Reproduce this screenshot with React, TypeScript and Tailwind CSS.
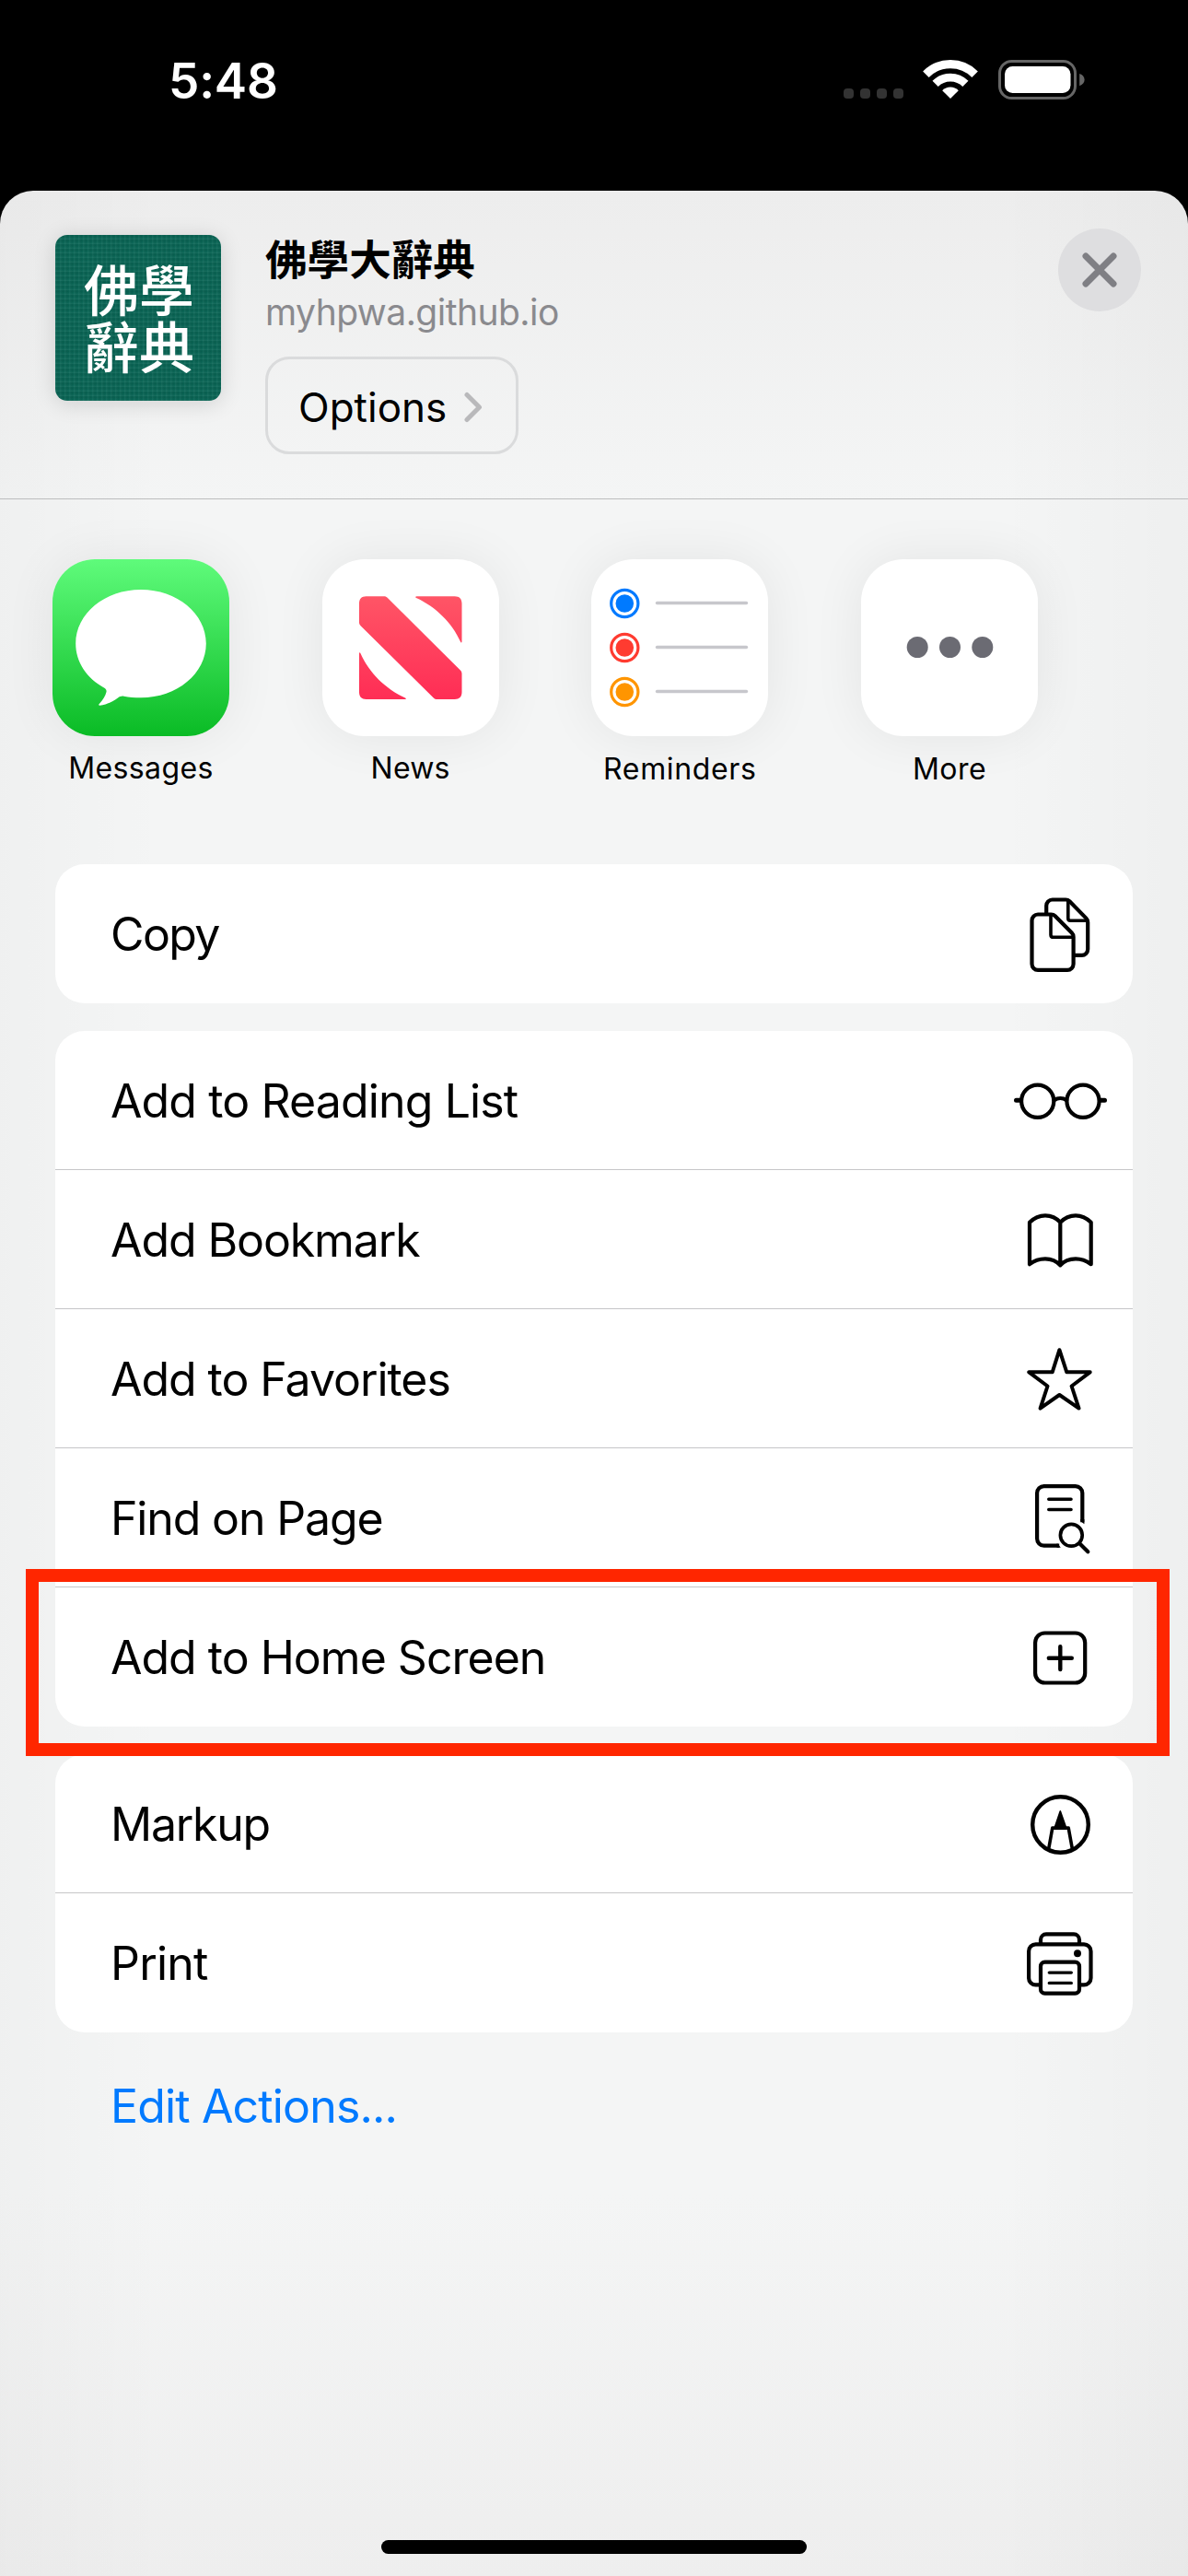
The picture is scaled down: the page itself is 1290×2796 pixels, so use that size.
import React from "react";

function StatusBar() {
  return (
    <div className="flex h-[207px] items-start justify-between pt-[65px] pr-[111px] pl-[183px]">
      <div className="text-[53px] leading-[46px] font-semibold tracking-[-0.2px] text-white">5:48</div>
      <div className="flex items-start">
        <div className="mt-[31px] flex gap-[7px]">
          {[0, 1, 2, 3].map((i) => (
            <span key={i} className="size-[11px] rounded-[4px] bg-[#333333]" />
          ))}
        </div>
        <svg className="ml-[21px] h-[43px] w-[60px]" viewBox="0 0 60 43" fill="none" stroke="#fff">
          <path d="M3.4 15.7a37.6 37.6 0 0 1 53.2 0" strokeWidth="9.2" />
          <path d="M13.6 25.9a23.2 23.2 0 0 1 32.8 0" strokeWidth="8.8" />
          <path d="M30 42l-8.8-8.8a12.6 12.6 0 0 1 17.6 0z" fill="#fff" stroke="none" />
        </svg>
        <svg className="ml-[22px] h-[43px] w-[95px]" viewBox="0 0 95 43">
          <rect x="1.5" y="1.5" width="82" height="40" rx="13" fill="none" stroke="#666666" strokeWidth="3" />
          <rect x="7" y="7" width="71.5" height="29" rx="8.5" fill="#fff" />
          <path d="M88.2 15c3.4 1.2 5.4 3.6 5.4 6.6s-2 5.400-5.400 6.600z" fill="#666666" />
        </svg>
      </div>
    </div>
  );
}

function Header() {
  return (
    <header className="flex h-[335px] items-start border-b border-[#bcbdbe] pl-[60px]">
      <div className="mt-[48px] flex size-[180px] items-center justify-center rounded-[13px] bg-[#0a6656] bg-[repeating-linear-gradient(0deg,rgba(255,255,255,0.06)_0px,rgba(255,255,255,0)_2px,rgba(0,40,30,0.1)_4px,rgba(255,255,255,0)_5px),repeating-linear-gradient(90deg,rgba(255,255,255,0.05)_0px,rgba(0,40,30,0.08)_3px,rgba(255,255,255,0)_5px)] shadow-[0_3px_24px_rgba(0,0,0,0.14)]">
        <div className="mt-[-5px] ml-[2px] flex flex-col text-center font-['Noto_Sans_CJK_TC',sans-serif] text-[60px] leading-[62px] font-medium text-white">
          <span>佛學</span>
          <span>辭典</span>
        </div>
      </div>
      <div className="mt-[46px] ml-[48px] flex flex-col items-start">
        <div className="font-['Noto_Sans_CJK_TC',sans-serif] text-[45.600px] leading-[53px] font-bold text-black">
          佛學大辭典
        </div>
        <div className="mt-[9px] text-[39px] leading-[47px] tracking-[-0.52px] text-[#8a8a8e]">
          myhpwa.github.io
        </div>
        <button className="mt-[25px] flex h-[106px] w-[275px] items-center rounded-[26px] border-[3px] border-[#dadbdc] pt-[4px] pl-[33px]">
          <span className="text-[44px] leading-[54px] text-black">Options</span>
          <svg className="ml-[19px] h-[36px] w-[22px]" viewBox="0 0 22 36" fill="none">
            <path
              d="M3 4.500l13.500 13.500L3 31.500"
              stroke="#b9b9bb"
              strokeWidth="5"
              strokeLinecap="round"
              strokeLinejoin="round"
            />
          </svg>
        </button>
      </div>
      <button className="mt-[41px] mr-[51px] ml-auto flex size-[90px] items-center justify-center rounded-full bg-[#dedee0]">
        <svg className="size-[38px]" viewBox="0 0 38 38">
          <path d="M4 4l30 30M34 4L4 34" stroke="#7f7f84" strokeWidth="7" strokeLinecap="round" />
        </svg>
      </button>
    </header>
  );
}

const messagesArt = (
  <svg viewBox="0 0 192 192" className="size-full">
    <defs>
      <linearGradient id="messages" x1="0" y1="0" x2="0" y2="1">
        <stop offset="0" stopColor="#5ffb7b" />
        <stop offset="1" stopColor="#0abb25" />
      </linearGradient>
    </defs>
    <rect width="192" height="192" fill="url(#messages)" />
    <path
      d="M96 33c39.200 0 70.800 26 70.800 58.500S135.200 150.300 96 150.300c-6.800 0-12.800-.5-18.500-1.600-2.500-.4-4.500.3-6.500 1.800-6 4.300-13 7.600-19.600 8.300-1.200.1-1.500-.9-.7-1.700 4-4.200 6.800-8.600 7.800-13.100.3-1.700-.3-3-1.700-4.100C37 129.300 25.200 111.500 25.200 91.500 25.200 59 56.800 33 96 33z"
      fill="#fff"
    />
  </svg>
);

const newsArt = (
  <svg viewBox="0 0 192 192" className="size-full">
    <defs>
      <linearGradient id="news" gradientUnits="userSpaceOnUse" x1="0" y1="40" x2="0" y2="152">
        <stop offset="0" stopColor="#ff5566" />
        <stop offset="1" stopColor="#ff2d55" />
      </linearGradient>
    </defs>
    <g fill="url(#news)">
      <path d="M47.500 40.300h19.500c1.600 0 2.800.5 3.900 1.600l79 78.500c1.100 1.100 1.600 2.300 1.600 3.900v20c0 5-2.700 7.700-7.700 7.700h-19.100c-1.600 0-2.800-.5-3.900-1.600L41.600 72.200c-1.100-1.100-1.600-2.300-1.600-3.900V48c0-5 2.700-7.700 7.500-7.700z" />
      <path d="M102.500 40.300h41.300c5 0 7.700 2.700 7.700 7.700v41.200c0 1.500-1 1.600-1.500.3C141 69 123 51.500 102 42c-1.300-.6-1-1.700.5-1.700z" />
      <path d="M40 102.500c0-1.500 1-1.600 1.500-.3 9 20.500 27 38.500 48.500 48.200 1.300.5 1 1.600-.5 1.600h-42c-4.800 0-7.500-2.700-7.500-7.700z" />
    </g>
  </svg>
);

const remindersArt = (
  <svg viewBox="0 0 192 192" className="size-full">
    {[
      { y: 48, color: "#007aff" },
      { y: 96, color: "#ff3b30" },
      { y: 144, color: "#ff9500" },
    ].map(({ y, color }) => (
      <g key={y}>
        <circle cx="36.300" cy={y} r="14.600" fill="none" stroke={color} strokeWidth="3.200" />
        <circle cx="36.300" cy={y} r="9.800" fill={color} />
        <path d={`M71.500 ${y - 0.5}H168.500`} stroke="#c7c7cc" strokeWidth="3.400" strokeLinecap="round" />
      </g>
    ))}
  </svg>
);

const moreArt = (
  <svg viewBox="0 0 192 192" className="size-full" fill="#6b6b73">
    <circle cx="61.200" cy="95.500" r="11.500" />
    <circle cx="96.500" cy="95.500" r="11.500" />
    <circle cx="131.800" cy="95.500" r="11.500" />
  </svg>
);

const apps = [
  { name: "Messages", art: messagesArt, label: "tracking-[0.4px]" },
  { name: "News", art: newsArt, label: "tracking-[0.2px]" },
  { name: "Reminders", art: remindersArt, label: "tracking-[0.65px] pt-px" },
  { name: "More", art: moreArt, label: "tracking-[0.45px] pt-px" },
];

function AppRow() {
  return (
    <div className="flex h-[396px] gap-[100.67px] pt-[65px] pl-[57px]">
      {apps.map((app) => (
        <div key={app.name} className="flex w-[192px] shrink-0 flex-col items-center">
          <div className="size-[192px] overflow-hidden rounded-[46px] bg-white shadow-[0_0_56px_rgba(0,0,0,0.07)]">
            {app.art}
          </div>
          <div className={`mt-[14px] text-[32px] leading-[41px] text-black ${app.label}`}>{app.name}</div>
        </div>
      ))}
    </div>
  );
}

function Glyph({ children }: { children: React.ReactNode }) {
  return (
    <svg
      className="mt-[15px] mr-[19px] size-[120px] shrink-0"
      viewBox="0 0 120 120"
      fill="none"
      stroke="#000"
      strokeWidth="4.200"
      strokeLinecap="round"
      strokeLinejoin="round"
    >
      {children}
    </svg>
  );
}

const copyIcon = (
  <Glyph>
    <g transform="translate(0 1)">
      <path d="M50.500 38.500H36a6.500 6.500 0 0 0-6.500 6.500v47.300a6.500 6.500 0 0 0 6.500 6.500h32.100a6.500 6.500 0 0 0 6.500-6.500V63c0-2-.5-3.100-1.800-4.400L54.700 40.300c-1.300-1.300-2.400-1.800-4.200-1.800z" />
      <path d="M50 39.500v21.300c0 1.700.8 2.500 2.500 2.500H74" strokeWidth="3.600" />
      <path d="M45.200 37.500V29a6.500 6.500 0 0 1 6.500-6.500h14.500c1.800 0 2.900.5 4.200 1.800l18 18.300c1.300 1.300 1.800 2.400 1.800 4.400v29.300a6.500 6.500 0 0 1-6.500 6.500H75" strokeLinecap="butt" />
      <path d="M68.800 24v18.800c0 1.700.8 2.500 2.500 2.500H89.500" strokeWidth="3.600" />
    </g>
  </Glyph>
);

const glassesIcon = (
  <Glyph>
    <circle cx="35.700" cy="61.300" r="17.600" />
    <circle cx="85" cy="61.300" r="17.600" />
    <path d="M53.500 60.200c4-2.700 9.700-2.700 13.700 0" />
    <path d="M12.500 60.300h5M103.500 60.300h5" strokeWidth="5" />
  </Glyph>
);

const bookIcon = (
  <Glyph>
    <path d="M27 87.200V41.700C32 36.800 38 34.300 44 34.300s12 2.500 16.300 7.400C65 36.800 71 34.300 77 34.300s11.700 2.500 16.700 7.400v45.500C88.500 83.300 82.500 81.300 77 81.300s-12.500 2.200-16.700 7C56 83.500 49.500 81.300 44 81.300s-12 2-17 5.900zM60.300 41.700V88" />
  </Glyph>
);

const starIcon = (
  <Glyph>
    <path
      d="M59.400 29.200L67.300 53.300L92.700 53.300L72.600 68.500L80.500 92.600L59.400 78L38.600 92.600L46.500 68.500L26.300 53.300L51.700 53.300Z"
      strokeWidth="4"
    />
  </Glyph>
);

const findIcon = (
  <Glyph>
    <path d="M84.300 65.200V33.600a7.500 7.500 0 0 0-7.500-7.500H42.600a7.500 7.500 0 0 0-7.500 7.500v49.500a7.500 7.500 0 0 0 7.500 7.500h16.600" strokeLinecap="butt" />
    <path d="M86.400 67.200l-4.200-3.200v-2h4.200zM60.800 92.700l-3.300-4.200h-1v4.200z" fill="#000" stroke="none" />
    <path d="M47.800 40.200h24.200M47.800 51.500h24.200" strokeWidth="3.600" />
    <circle cx="72.300" cy="79.300" r="11.900" strokeWidth="3.700" />
    <path d="M81.500 88.500l8.800 8.700" />
  </Glyph>
);

const addIcon = (
  <Glyph>
    <rect x="33.100" y="34.500" width="54.100" height="54" rx="10.500" />
    <path d="M47.800 61.700h25M60.300 49.300v24.800" strokeWidth="4.400" />
  </Glyph>
);

const markupIcon = (
  <Glyph>
    <circle cx="60.500" cy="61.500" r="30.300" strokeWidth="4.400" />
    <path d="M60.300 47L53.900 66h13.100z" fill="#000" strokeWidth="1.800" />
    <path d="M47.800 87.300l4-22.300h17.400l4.100 22.300" strokeWidth="3.600" />
  </Glyph>
);

const printIcon = (
  <Glyph>
    <path d="M39 40v-4.600a6 6 0 0 1 6-6h30a6 6 0 0 1 6 6V40" />
    <rect x="26.100" y="40.400" width="67.400" height="44" rx="7.500" />
    <rect x="39" y="59.700" width="42" height="34" rx="4.500" fill="#fff" />
    <path d="M48.300 71.100h24M48.300 82.400h24" strokeWidth="3.400" />
    <circle cx="79" cy="50.200" r="4" fill="#000" stroke="none" />
  </Glyph>
);

type Action = { label: string; icon: React.ReactNode; tracking: string; highlighted?: boolean };

const groups: Action[][] = [
  [{ label: "Copy", icon: copyIcon, tracking: "tracking-[-1.6px]" }],
  [
    { label: "Add to Reading List", icon: glassesIcon, tracking: "tracking-[-0.88px]" },
    { label: "Add Bookmark", icon: bookIcon, tracking: "tracking-[-1.1px]" },
    { label: "Add to Favorites", icon: starIcon, tracking: "tracking-[-1.05px]" },
    { label: "Find on Page", icon: findIcon, tracking: "tracking-[-1.15px]" },
    { label: "Add to Home Screen", icon: addIcon, tracking: "tracking-[-1px]", highlighted: true },
  ],
  [
    { label: "Markup", icon: markupIcon, tracking: "tracking-[-1.25px]" },
    { label: "Print", icon: printIcon, tracking: "tracking-[-0.8px]" },
  ],
];

function ActionRow({ action }: { action: Action }) {
  return (
    <div className="relative flex h-[151px] items-start justify-between border-b border-[#c6c6c8] pl-[60px] last:border-b-0">
      <span className={`text-[50px] leading-[152px] text-black ${action.tracking}`}>{action.label}</span>
      {action.icon}
      {action.highlighted && (
        <div className="absolute top-[-20px] right-[-40px] bottom-[-32px] left-[-32px] z-10 border-[14px] border-[#ff2600]" />
      )}
    </div>
  );
}

export default function App() {
  return (
    <div className="flex h-[2796px] w-[1290px] flex-col bg-black font-['Inter',sans-serif]">
      <StatusBar />
      <main className="flex flex-1 flex-col rounded-t-[36px] bg-[linear-gradient(90deg,rgba(0,0,0,0.018)_0%,rgba(0,0,0,0)_14%,rgba(0,0,0,0)_84%,rgba(0,0,0,0.022)_100%),linear-gradient(180deg,#ededed_0%,#f4f5f5_13%,#f4f5f5_84%,#eeeeee_100%)]">
        <Header />
        <AppRow />
        <div className="flex flex-col gap-[30px] px-[60px]">
          {groups.map((group) => (
            <section key={group[0].label} className="rounded-[32px] bg-white">
              {group.map((action) => (
                <ActionRow key={action.label} action={action} />
              ))}
            </section>
          ))}
        </div>
        <button className="ml-[120px] self-start text-[50px] leading-[160px] tracking-[-0.85px] text-[#007aff]">
          Edit Actions...
        </button>
        <div className="mt-auto mb-[24px] h-[15px] w-[462px] self-center rounded-full bg-black" />
      </main>
    </div>
  );
}
